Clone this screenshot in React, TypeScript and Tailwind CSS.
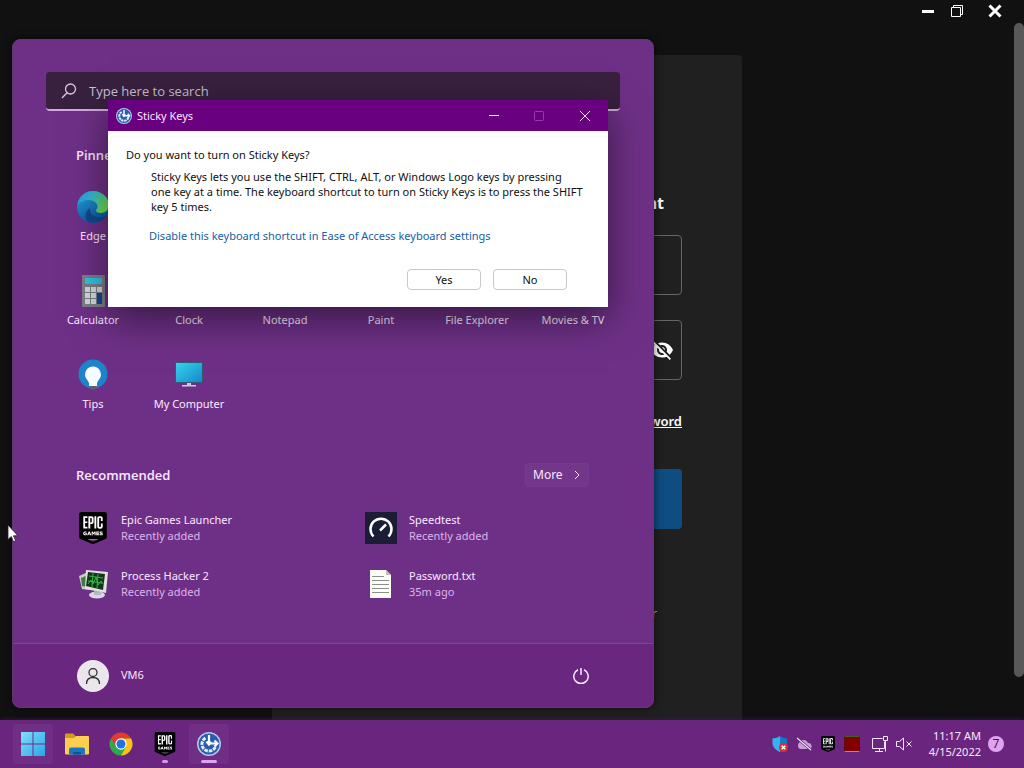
import type { ReactNode } from 'react';
import { MdVisibilityOff } from 'react-icons/md';
import { SiEpicgames } from 'react-icons/si';

type IconProps = {
  className?: string;
};

type PinnedApp = {
  name: string;
  icon?: ReactNode;
};

type RecommendedItem = {
  name: string;
  detail: string;
  icon: ReactNode;
};

const EpicIcon = ({ className = '' }: IconProps) => (
  <span className={`relative flex items-center justify-center ${className}`}>
    <span className="absolute inset-x-[20%] top-[10%] bottom-[12%] bg-white" />
    <SiEpicgames className="relative w-full h-full text-black" />
  </span>
);

const EdgeIcon = () => (
  <svg className="w-8 h-8" viewBox="0 0 32 32" aria-hidden="true">
    <defs>
      <linearGradient id="edge-top" x1="0" y1="0" x2="1" y2="0.4">
        <stop offset="0" stopColor="#2390d8" />
        <stop offset="0.5" stopColor="#35bfd0" />
        <stop offset="1" stopColor="#6ee05a" />
      </linearGradient>
      <linearGradient id="edge-side" x1="0" y1="0" x2="0.4" y2="1">
        <stop offset="0" stopColor="#2aa5e2" />
        <stop offset="1" stopColor="#0c59a4" />
      </linearGradient>
    </defs>
    <circle cx="16" cy="16" r="16" fill="url(#edge-side)" />
    <path
      d="M0.500 14C2 5 8.500 0 16 0c9 0 16 6.500 16 14 0 5-4 8-8 8-3 0-5-1-5-2.500 0-1 1.500-1.500 1.500-4 0-3.500-4-6.500-8.500-6.500C7 9 2.500 11 .5 14z"
      fill="url(#edge-top)"
    />
    <path
      d="M11 31C7 27 8 20 13 17c-.5 6 4 9.500 10 9.500 3 0 5-1 6.500-2C26 30 18 33.500 11 31z"
      fill="#114a8b"
    />
  </svg>
);

const CalculatorIcon = () => (
  <svg className="w-8 h-8" viewBox="0 0 32 32" aria-hidden="true">
    <rect x="5" y="0" width="23" height="32" rx="1" fill="#7c7f86" />
    <rect x="8" y="3" width="17" height="6" fill="#35c1e4" />
    {[12, 18, 24].map((y) =>
      [8, 14, 20].map((x) => (
        <rect key={`${x}-${y}`} x={x} y={y} width="5" height="5" fill="#d5d8dc" />
      ))
    )}
    <rect x="20" y="18" width="5" height="11" fill="#12488f" />
  </svg>
);

const TipsIcon = () => (
  <svg className="w-8 h-8" viewBox="0 0 32 32" aria-hidden="true">
    <circle cx="16" cy="15" r="14.500" fill="#1d83cb" />
    <path
      d="M16 7.500a8 8 0 0 0-8 8c0 3.500 3 5.500 4 8.500v3h8v-3c1-3 4-5 4-8.500a8 8 0 0 0-8-8z"
      fill="#f7fbfd"
    />
    <path d="M12 27h8l-2 3.500h-4z" fill="#5c6067" />
  </svg>
);

const ComputerIcon = () => (
  <svg className="w-8 h-8" viewBox="0 0 32 32" aria-hidden="true">
    <defs>
      <linearGradient id="screen" x1="0" y1="0" x2="1" y2="1">
        <stop offset="0" stopColor="#35d5e8" />
        <stop offset="1" stopColor="#1687cf" />
      </linearGradient>
    </defs>
    <rect x="2" y="3" width="28" height="21" rx="1" fill="#345a74" />
    <rect x="3" y="4" width="26" height="19" fill="url(#screen)" />
    <path d="M14 24h4v2h5v1.500H9V26h5z" fill="#c8ced3" />
  </svg>
);

const ProcessHackerIcon = () => (
  <svg className="w-8 h-8" viewBox="0 0 32 32" aria-hidden="true">
    <path d="M2 8l9-4 2 18-8-1z" fill="#c9cdc8" />
    <path d="M4 10l5-2 1 11-5-1z" fill="#3a7c41" />
    <path d="M9 2l22 2-2 21-21-4z" fill="#dfe2dd" />
    <path d="M11 4l17 2-2 16-17-4z" fill="#14351a" />
    <path
      d="M11 16l3-4 2 4 3-7 2 8 3-4 2 3M12 8l14 2M11 13l14 2M16 5l-1 14M21 6l-1 14"
      fill="none"
      stroke="#35b548"
      strokeWidth="1"
    />
    <ellipse cx="20" cy="27" rx="8" ry="3.500" fill="#d9dbe2" />
    <path d="M17 23l7 1v3h-7z" fill="#b5b9c2" />
  </svg>
);

const SpeedtestIcon = () => (
  <svg className="w-8 h-8" viewBox="0 0 32 32" aria-hidden="true">
    <rect width="32" height="32" fill="#1b1c35" />
    <path
      d="M8.500 24.500A10.500 10.500 0 1 1 23.500 24.500"
      fill="none"
      stroke="#fff"
      strokeWidth="2.500"
    />
    <path d="M15 18.500l6-6" stroke="#fff" strokeWidth="2.500" />
  </svg>
);

const TextFileIcon = () => (
  <svg className="w-8 h-8" viewBox="0 0 32 32" aria-hidden="true">
    <path d="M5 2h16l5 5v23H5z" fill="#fdfdf8" />
    <path d="M21 2v5h5z" fill="#b9bcb8" />
    <path
      d="M7 8.500h12M7 12.500h17M7 16.500h17M7 20.500h17M7 24.500h17"
      stroke="#8b8f8c"
      strokeWidth="1"
    />
  </svg>
);

const WindowsIcon = () => (
  <svg className="w-6 h-6" viewBox="0 0 24 24" aria-hidden="true">
    <defs>
      <linearGradient id="win" x1="0" y1="0" x2="1" y2="1">
        <stop offset="0" stopColor="#7fe0fb" />
        <stop offset="1" stopColor="#2ba4ea" />
      </linearGradient>
    </defs>
    <path d="M0 0h11.500v11.500H0zM12.500 0H24v11.500H12.500zM0 12.500h11.500V24H0zM12.500 12.500H24V24H12.500z" fill="url(#win)" />
  </svg>
);

const FolderIcon = () => (
  <svg className="w-6 h-6" viewBox="0 0 24 24" aria-hidden="true">
    <path d="M0 2.500Q0 1.500 1 1.500h7l2.500 2.500v4H0z" fill="#d9981a" />
    <path d="M0 6h9l2-2h12q1 0 1 1v16q0 1.500-1 1.500H1q-1 0-1-1.500z" fill="#fcd04e" />
    <path d="M4 22.500v-5q0-2 2-2h12q2 0 2 2v5z" fill="#1976c2" />
    <path d="M8 22.500v-2.500h8v2.500z" fill="#0f549c" />
  </svg>
);

const ChromeIcon = () => (
  <svg className="w-6 h-6" viewBox="0 0 24 24" aria-hidden="true">
    <path d="M12 12V6.250h9.960A11.500 11.500 0 0 1 12 23.500z" fill="#fbc116" />
    <path d="M12 12l5 2.900-5 8.600A11.500 11.500 0 0 1 2.040 6.250z" fill="#2da94f" />
    <path d="M12 6.250h9.960A11.500 11.500 0 0 0 2.040 6.250L7 14.900z" fill="#e33b2e" />
    <circle cx="12" cy="12" r="5.700" fill="#fff" />
    <circle cx="12" cy="12" r="4.500" fill="#1b74e8" />
  </svg>
);

const EaseOfAccessIcon = ({ className = '' }: IconProps) => (
  <svg className={className} viewBox="0 0 24 24" aria-hidden="true">
    <circle cx="12" cy="12" r="12" fill="#b4c8ea" />
    <circle cx="12" cy="12" r="10.500" fill="#2a5cab" />
    <path
      d="M8.500 6A7 7 0 1 0 18.700 14"
      fill="none"
      stroke="#e4eefb"
      strokeWidth="3"
      strokeDasharray="3.500 1"
    />
    <path
      d="M12 3v8.500h8M9.500 9.500L12 12.500l2.500-2.500M17.500 8.500l3 3-3 3"
      fill="none"
      stroke="#fff"
      strokeWidth="2.200"
    />
  </svg>
);

const pinnedRows: PinnedApp[][] = [
  [{ name: 'Edge', icon: <EdgeIcon /> }],
  [
    { name: 'Calculator', icon: <CalculatorIcon /> },
    { name: 'Clock' },
    { name: 'Notepad' },
    { name: 'Paint' },
    { name: 'File Explorer' },
    { name: 'Movies & TV' },
  ],
  [
    { name: 'Tips', icon: <TipsIcon /> },
    { name: 'My Computer', icon: <ComputerIcon /> },
  ],
];

const recommended: RecommendedItem[] = [
  {
    name: 'Epic Games Launcher',
    detail: 'Recently added',
    icon: <EpicIcon className="w-8 h-8" />,
  },
  { name: 'Speedtest', detail: 'Recently added', icon: <SpeedtestIcon /> },
  { name: 'Process Hacker 2', detail: 'Recently added', icon: <ProcessHackerIcon /> },
  { name: 'Password.txt', detail: '35m ago', icon: <TextFileIcon /> },
];

const LauncherWindow = () => (
  <main className="flex-1 min-h-0 flex flex-col overflow-hidden">
    <div className="h-[23px] shrink-0 flex items-center justify-end pr-[19px] pb-[2px] text-white">
      <button type="button" aria-label="Minimize" className="w-3 mr-[17px]">
        <svg className="w-3 h-3" viewBox="0 0 12 12">
          <path d="M0 6.500h12" stroke="currentColor" strokeWidth="3" />
        </svg>
      </button>
      <button type="button" aria-label="Restore" className="w-3 mr-[22px]">
        <svg className="w-3 h-3" viewBox="0 0 12 12" fill="none" stroke="currentColor">
          <path d="M.5 2.500h9v9h-9zM2.500 2.500v-2h9v9h-2" />
        </svg>
      </button>
      <button type="button" aria-label="Close" className="w-5 flex justify-center">
        <svg className="w-[14px] h-[14px]" viewBox="0 0 14 14">
          <path d="M1.500 1.500l11 11M12.500 1.500l-11 11" stroke="currentColor" strokeWidth="3" />
        </svg>
      </button>
    </div>
    <div className="flex-1 min-h-0 flex">
      <div className="flex-1 flex justify-center pt-8">
        <form className="w-[470px] px-[60px] pt-[136px] flex flex-col rounded-t bg-[#202020] text-white">
          <h1 className="pr-[18px] text-base leading-6 font-bold text-right">Account</h1>
          <input
            type="email"
            aria-label="Email Address"
            className="mt-5 h-[60px] shrink-0 rounded border border-[#666]"
          />
          <div className="mt-[25px] h-[60px] shrink-0 flex items-center rounded border border-[#666]">
            <input type="password" aria-label="Password" className="flex-1 h-full" />
            <button type="button" aria-label="Show password" className="mr-[7px]">
              <MdVisibilityOff className="w-6 h-6" />
            </button>
          </div>
          <a href="#" className="mt-[29px] self-end text-[13px] leading-6 font-semibold underline">
            Forgot Your Password
          </a>
          <button
            type="submit"
            aria-label="Log in"
            className="mt-9 h-[60px] shrink-0 rounded bg-[#0f4c81]"
          />
          <p className="mt-[72px] pr-[25px] text-right text-[13px] leading-6 text-[#aaa]">or</p>
        </form>
      </div>
      <div className="w-[10px] pb-[43px]">
        <div className="h-full rounded-full bg-[#585858]" />
      </div>
    </div>
  </main>
);

const StartMenu = () => (
  <section
    aria-label="Start"
    className="absolute left-3 bottom-[60px] w-[642px] rounded-lg border border-[#5c3a6b] bg-[#6e3087] text-[#fbe9ff] shadow-[0_0_8px_rgba(0,0,0,0.6)] overflow-hidden"
  >
    <div className="px-8 pt-8">
      <label className="mx-px h-[39px] flex items-center gap-3 pl-[15px] rounded bg-[#38213f] border-b-2 border-[#d9a5e8]">
        <svg className="w-4 h-4" viewBox="0 0 16 16" fill="none" stroke="#d9c6df" strokeWidth="1.300">
          <circle cx="9.500" cy="6" r="5" />
          <path d="M6 9.700L1 15" />
        </svg>
        <input
          type="search"
          aria-label="Search"
          placeholder="Type here to search"
          className="flex-1 font-['Open_Sans',sans-serif] text-[13px] leading-5 placeholder:text-[#cdbfd2] outline-none"
        />
      </label>
      <h2 className="mt-8 px-[31px] font-['Open_Sans',sans-serif] text-[13px] leading-6 font-semibold">
        Pinned
      </h2>
      <div className="mt-[14px]">
        {pinnedRows.map((row) => (
          <div key={row[0].name} className="grid grid-cols-6">
            {row.map((app) => (
              <button
                key={app.name}
                type="button"
                className="h-[84px] pt-[10px] flex flex-col items-center gap-1 text-[11px] leading-[18px] whitespace-nowrap"
              >
                <span className="w-8 h-8">{app.icon}</span>
                {app.name}
              </button>
            ))}
          </div>
        ))}
      </div>
      <div className="mt-[30px] px-8 flex items-center justify-between">
        <h2 className="-ml-px font-['Open_Sans',sans-serif] text-[13px] leading-6 font-semibold">
          Recommended
        </h2>
        <button
          type="button"
          className="w-16 h-6 flex items-center justify-between px-[7px] rounded border border-[#763a8e] bg-[#73368b] text-[12px]"
        >
          More
          <svg className="w-2 h-2" viewBox="0 0 8 8" fill="none" stroke="currentColor">
            <path d="M2 0l4 4-4 4" />
          </svg>
        </button>
      </div>
      <ul className="mt-[13px] pl-8 grid grid-cols-[288px_1fr]">
        {recommended.map((item) => (
          <li key={item.name} className="h-14 flex items-center gap-3">
            {item.icon}
            <div className="text-[11px] leading-4">
              <p>{item.name}</p>
              <p className="text-[#dcb4e8]">{item.detail}</p>
            </div>
          </li>
        ))}
      </ul>
    </div>
    <div className="mt-[31px] h-16 px-16 flex items-center justify-between border-t border-[#7d4791] bg-[#6a2780]">
      <button type="button" className="flex items-center gap-3 text-[11px]">
        <span className="w-8 h-8 rounded-full bg-[#ebe6ec] flex items-center justify-center">
          <svg className="w-4 h-4" viewBox="0 0 16 16" fill="none" stroke="#333" strokeWidth="1.300">
            <circle cx="8" cy="4.500" r="4" />
            <path d="M1.500 16c0-4 2.500-6.500 6.500-6.500s6.500 2.500 6.500 6.500" />
          </svg>
        </span>
        VM6
      </button>
      <button type="button" aria-label="Power">
        <svg className="w-4 h-4" viewBox="0 0 16 16" fill="none" stroke="currentColor" strokeWidth="1.500">
          <path d="M5 1.800a7.200 7.200 0 1 0 6 0M8 0v7" />
        </svg>
      </button>
    </div>
  </section>
);

const StickyKeysDialog = () => (
  <div
    role="dialog"
    aria-labelledby="sticky-title"
    className="absolute left-[108px] top-[100px] w-[500px] bg-white text-[#111] text-[11px] leading-[15px] shadow-[0_12px_36px_rgba(0,0,0,0.5)]"
  >
    <div className="h-[31px] pl-2 flex items-center bg-[#68007f] text-[#fbe6ff]">
      <EaseOfAccessIcon className="w-4 h-4" />
      <h2 id="sticky-title" className="ml-[5px] flex-1">
        Sticky Keys
      </h2>
      <button type="button" aria-label="Minimize" className="w-[45px] flex justify-center">
        <svg className="w-[10px] h-[10px]" viewBox="0 0 10 10" stroke="currentColor">
          <path d="M0 4.500h10" />
        </svg>
      </button>
      <button
        type="button"
        disabled
        aria-label="Maximize"
        className="w-[45px] flex justify-center text-[#963ea8]"
      >
        <svg className="w-[10px] h-[10px]" viewBox="0 0 10 10" fill="none" stroke="currentColor">
          <rect x=".5" y=".5" width="9" height="9" rx="1" />
        </svg>
      </button>
      <button type="button" aria-label="Close" className="w-[47px] flex justify-center">
        <svg className="w-[10px] h-[10px]" viewBox="0 0 10 10" stroke="currentColor">
          <path d="M0 0l10 10M10 0L0 10" />
        </svg>
      </button>
    </div>
    <div className="px-[18px] pt-4 pb-[17px]">
      <p>Do you want to turn on Sticky Keys?</p>
      <p className="mt-[7px] pl-[25px] whitespace-nowrap">
        Sticky Keys lets you use the SHIFT, CTRL, ALT, or Windows Logo keys by pressing
        <br />
        one key at a time. The keyboard shortcut to turn on Sticky Keys is to press the SHIFT
        <br />
        key 5 times.
      </p>
      <a href="#" className="block mt-[14px] ml-[23px] text-[#1560a8]">
        Disable this keyboard shortcut in Ease of Access keyboard settings
      </a>
      <div className="mt-[26px] pr-[23px] flex justify-end gap-3">
        <button type="button" className="w-[74px] h-[21px] rounded border border-[#c8c8c8]">
          Yes
        </button>
        <button type="button" className="w-[74px] h-[21px] rounded border border-[#c8c8c8]">
          No
        </button>
      </div>
    </div>
  </div>
);

const taskbarButton = 'relative w-10 h-10 flex items-center justify-center rounded';

const Taskbar = () => (
  <footer className="h-12 shrink-0 pl-[13px] pr-5 flex items-center justify-between bg-[#6a267f] text-[#fbe6ff] shadow-[0_0_4px_#3d1b48]">
    <nav className="flex gap-1">
      <button type="button" aria-label="Start" className={`${taskbarButton} bg-[#702e85]`}>
        <WindowsIcon />
      </button>
      <button type="button" aria-label="File Explorer" className={taskbarButton}>
        <FolderIcon />
      </button>
      <button type="button" aria-label="Chrome" className={taskbarButton}>
        <ChromeIcon />
      </button>
      <button type="button" aria-label="Epic Games" className={taskbarButton}>
        <EpicIcon className="w-6 h-6" />
        <span className="absolute bottom-[1px] w-[6px] h-[3px] rounded-full bg-[#d898e8]" />
      </button>
      <button type="button" aria-label="Sticky Keys" className={`${taskbarButton} bg-[#702e85]`}>
        <EaseOfAccessIcon className="w-6 h-6" />
        <span className="absolute bottom-[1px] w-4 h-[3px] rounded-full bg-[#e0a3ef]" />
      </button>
    </nav>
    <div className="flex items-center">
      <div className="flex items-center gap-2 pr-3">
        <svg className="w-4 h-4" viewBox="0 0 16 16" aria-hidden="true">
          <path d="M8 0C6 1.500 3 2.500.5 2.500V7c0 4 3 7 7.500 9z" fill="#35b3ee" />
          <path d="M8 0c2 1.500 4.500 2.500 7 2.500V7c0 4-3 7-7 9z" fill="#1678c8" />
          <circle cx="11.500" cy="11.500" r="4.500" fill="#d8322c" />
          <path d="M9.700 9.700l3.600 3.600M13.300 9.700l-3.600 3.600" stroke="#fff" strokeWidth="1.500" />
        </svg>
        <svg className="w-4 h-4" viewBox="0 0 16 16" aria-hidden="true">
          <path d="M4 13a4 4 0 0 1 0-7 4.500 4.500 0 0 1 8 1 3 3 0 0 1 1 6z" fill="#c9a0d6" />
          <path d="M1 2l14 12" stroke="#6a267f" strokeWidth="2.500" />
          <path d="M1 2l14 12" stroke="#f1dff5" strokeWidth="1.200" />
        </svg>
        <EpicIcon className="w-4 h-4" />
        <span className="w-4 h-4 bg-[#820000] border border-t-[#4b5b20] border-x-[#5a1010] border-b-[#8bb02a]" />
      </div>
      <div className="flex items-center gap-2">
        <svg className="w-4 h-4" viewBox="0 0 16 16" fill="none" stroke="currentColor" aria-hidden="true">
          <path d="M10.500 2.500h-10v10h12v-7M3 15.500h8M7.500 12.500v3M11.500.5h4v4h-4zM13.500 4.500v11" />
        </svg>
        <svg className="w-4 h-4" viewBox="0 0 16 16" fill="none" stroke="currentColor" aria-hidden="true">
          <path d="M.5 5.500h3l4-3.500v12l-4-3.500h-3zM10.500 5.500l5 5M15.500 5.500l-5 5" />
        </svg>
      </div>
      <div className="ml-[13px] w-14 text-right text-[11px] leading-4 whitespace-nowrap">
        <p>11:17 AM</p>
        <p>4/15/2022</p>
      </div>
      <span className="ml-[7px] w-4 h-4 rounded-full bg-[#e0a3ef] text-[#3b1447] text-[12px] leading-4 text-center">
        7
      </span>
    </div>
  </footer>
);

export default function App() {
  return (
    <div className="relative h-screen flex flex-col overflow-hidden bg-[#111] font-['Noto_Sans','Open_Sans',sans-serif]">
      <LauncherWindow />
      <Taskbar />
      <StartMenu />
      <StickyKeysDialog />
      <svg className="absolute left-[7px] top-[524px] w-3 h-[19px]" viewBox="0 0 12 19" aria-hidden="true">
        <path
          d="M1 1v14.500l3.300-3 2.200 5.300 2.200-1-2.200-5h4.400z"
          fill="#fff"
          stroke="#222"
          strokeWidth="0.800"
        />
      </svg>
    </div>
  );
}
